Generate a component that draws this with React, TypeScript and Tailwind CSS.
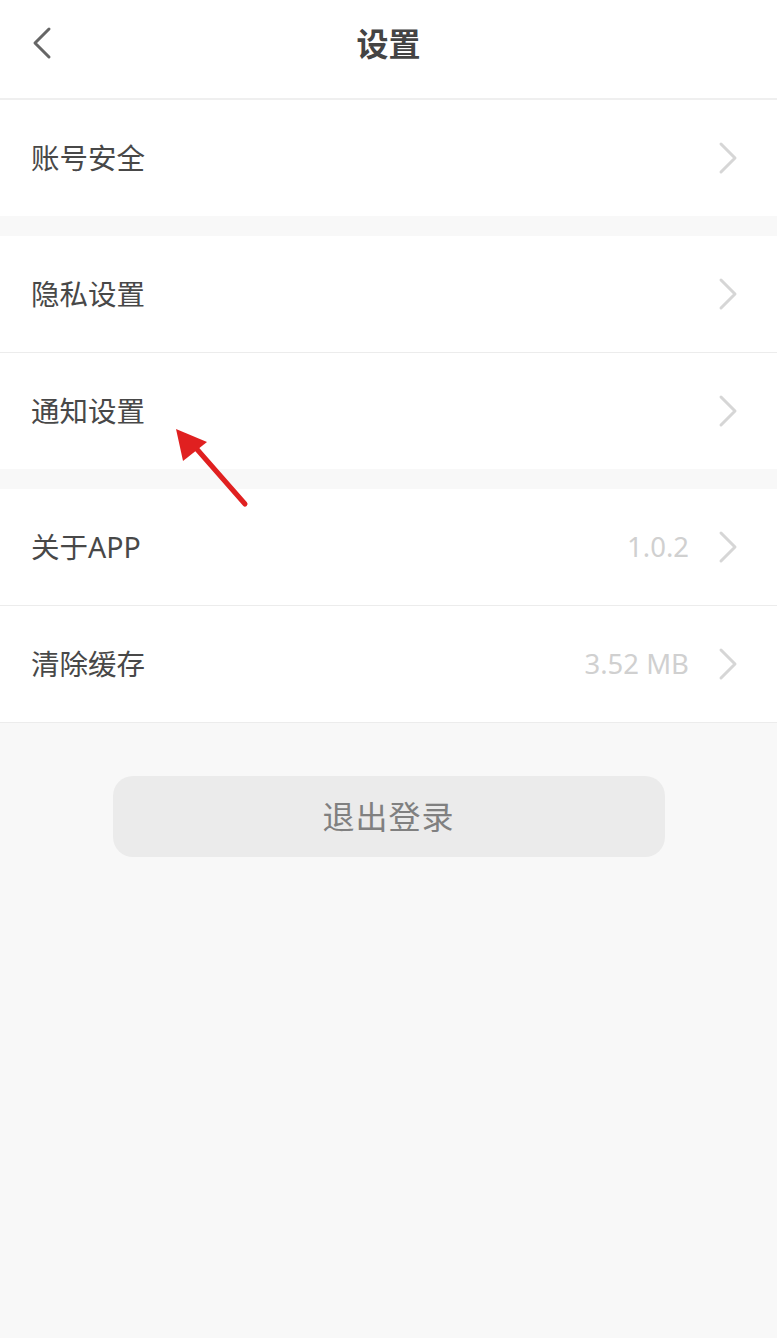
import React from 'react';

const font = { fontFamily: '"Noto Sans", "Noto Sans CJK SC", sans-serif' };

const Chevron: React.FC = () => (
  <svg width="22" height="34" viewBox="0 0 22 34" className="shrink-0">
    <path d="M4 3 L18 17 L4 31" fill="none" stroke="#d6d6d6" strokeWidth="3" strokeLinecap="round" strokeLinejoin="round" />
  </svg>
);

const Row: React.FC<{ label: string; value?: string; border?: boolean }> = ({ label, value, border }) => (
  <div className={`flex items-center pl-[31px] pr-[38px] bg-white ${border ? 'h-[117px] border-b border-[#ececec]' : 'h-[116px]'}`}>
    <span className="text-[28.5px] text-[#484848] flex-1">{label}</span>
    {value && <span className="text-[27.5px] text-[#d0d0d0] mr-[28px]">{value}</span>}
    <Chevron />
  </div>
);

export default function App() {
  return (
    <div className="relative w-[777px] h-[1338px] bg-[#f8f8f8] overflow-hidden" style={font}>
      <div className="relative h-[98px] bg-white flex items-center justify-center">
        <svg width="22" height="34" viewBox="0 0 22 34" className="absolute left-[31px] top-[26px]">
          <path d="M18 3 L4 17 L18 31" fill="none" stroke="#666666" strokeWidth="3" strokeLinecap="round" strokeLinejoin="round" />
        </svg>
        <span className="text-[32px] font-bold text-[#444444] -mt-[10px]">设置</span>
      </div>
      <div className="h-[2px] bg-[#efefef]" />

      <Row label="账号安全" />
      <div className="h-[20px]" />
      <Row label="隐私设置" border />
      <Row label="通知设置" />
      <div className="h-[20px]" />
      <Row label="关于APP" value="1.0.2" border />
      <Row label="清除缓存" value="3.52 MB" border />

      <div className="flex justify-center mt-[53px]">
        <button className="w-[552px] h-[81px] rounded-[20px] bg-[#ebebeb] text-[32px] text-[#808080] tracking-[1px]">
          退出登录
        </button>
      </div>

      <svg className="absolute left-0 top-0 pointer-events-none" width="777" height="1338">
        <line x1="245" y1="504" x2="195" y2="447" stroke="#e02020" strokeWidth="5" strokeLinecap="round" />
        <polygon points="176,429 183,461 207,442" fill="#e02020" />
      </svg>
    </div>
  );
}
